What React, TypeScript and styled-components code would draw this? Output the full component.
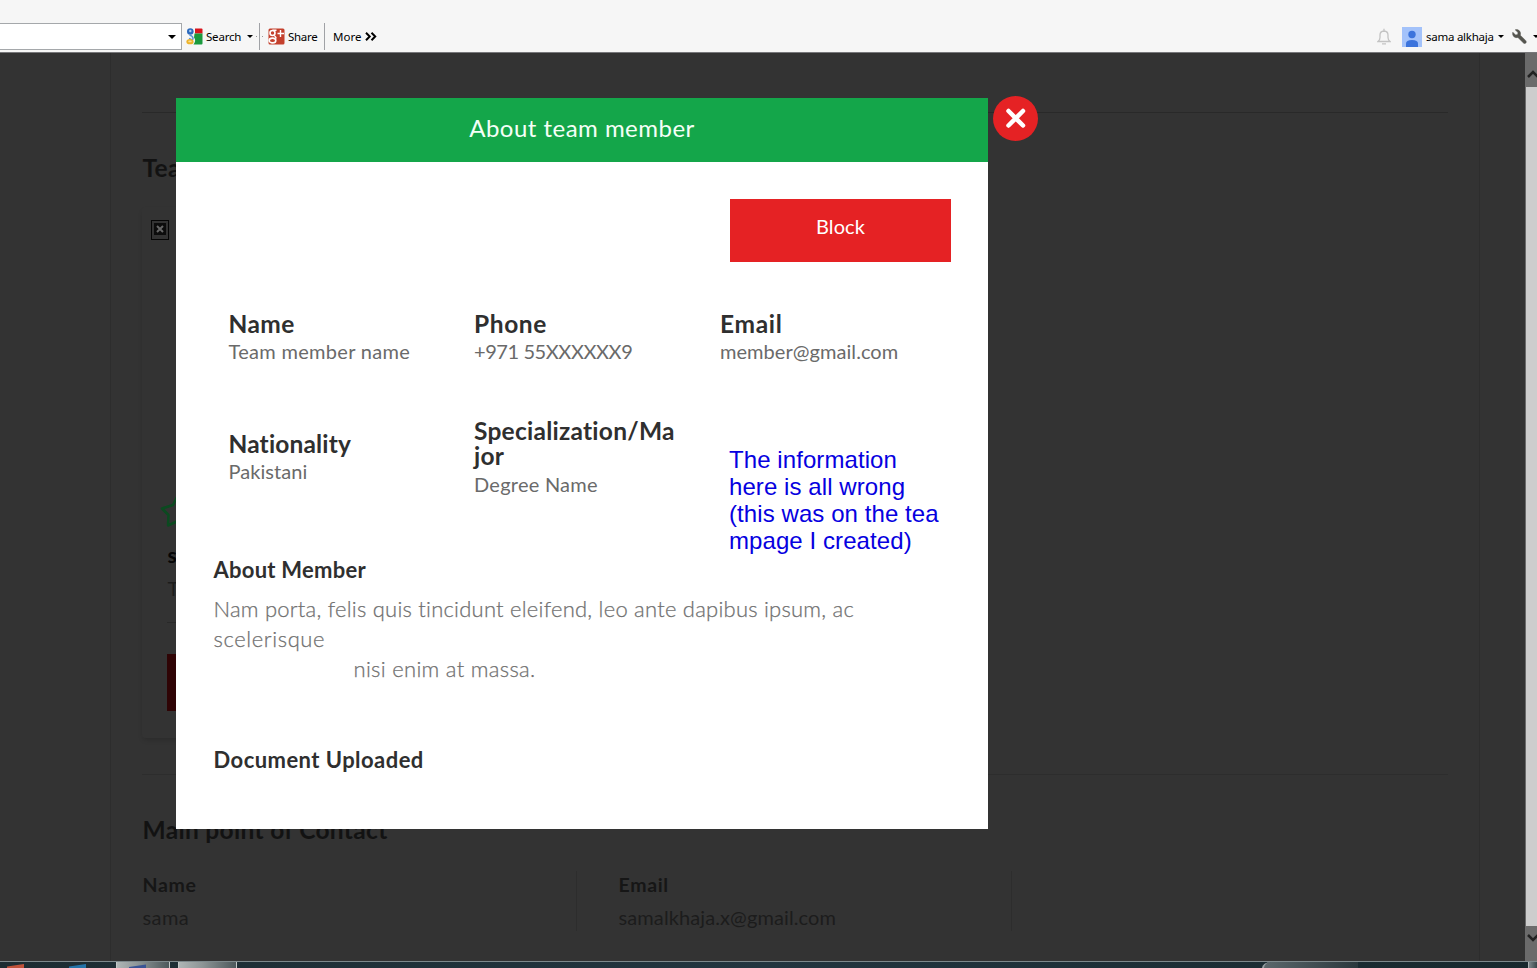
import React from "react";
import styled, { createGlobalStyle } from "styled-components";

const GlobalStyle = createGlobalStyle`
  * { box-sizing: border-box; }
  body { margin: 0; background: #333; overflow: hidden; font-family: Lato, "Open Sans", sans-serif; }
  h1, h2, h3, p { margin: 0; }
`;

const Screen = styled.div`
  display: flex;
  flex-direction: column;
  width: 1537px;
  height: 968px;
  overflow: hidden;
`;

/* Browser toolbar */
const Toolbar = styled.header`
  flex: none;
  display: flex;
  align-items: center;
  height: 53px;
  padding-top: 21px;
  background: #f6f6f6;
  border-bottom: 1px solid #77777a;
  font: 11.5px "Noto Sans", "Open Sans", sans-serif;
  color: #000;
`;
const AddressBox = styled.div`
  display: flex;
  align-items: center;
  justify-content: flex-end;
  width: 182px;
  height: 27px;
  padding-right: 5px;
  margin-right: 4px;
  background: #fff;
  border: 1px solid #a5a8ab;
  border-left: 0;
`;
const Caret = styled.i<{ $size?: number }>`
  flex: none;
  border: ${(p) => p.$size ?? 3}px solid transparent;
  border-top-color: #000;
  border-bottom: 0;
`;
const ToolText = styled.span<{ $w: number; $ls?: number; $gap?: number }>`
  width: ${(p) => p.$w}px;
  margin-left: ${(p) => p.$gap ?? 3}px;
  letter-spacing: ${(p) => p.$ls ?? 0}px;
  white-space: nowrap;
  line-height: 16px;
`;
const Divider = styled.i<{ $gap: number }>`
  width: 1px;
  height: 27px;
  margin-left: ${(p) => p.$gap}px;
  background: #a0a2a6;
`;
const Dot = styled.i<{ $gap: number }>`
  width: 1px;
  height: 1px;
  margin-left: ${(p) => p.$gap}px;
  background: #999;
`;
const IconSlot = styled.span<{ $before: number; $after?: number }>`
  display: flex;
  margin: 0 ${(p) => p.$after ?? 0}px 0 ${(p) => p.$before}px;
`;
const Account = styled.div`
  display: flex;
  align-items: center;
  margin: 0 -2px 0 auto;
`;

/* Page */
const Viewport = styled.main`
  position: relative;
  display: flex;
  flex: none;
  height: 908px;
  background: #333;
`;
const Sheet = styled.div`
  width: 1370px;
  margin: 0 45px 0 110px;
  padding: 59px 31px 0;
  border: 1px solid #2d2d2d;
  border-width: 0 1px;
`;
const Rule = styled.div<{ $faint?: boolean }>`
  height: 1px;
  background: ${(p) => (p.$faint ? "#2d2d2d" : "#292929")};
`;
const PageTitle = styled.h2`
  margin: 40px 0 0 0.5px;
  font-size: 24.5px;
  line-height: 30px;
  font-weight: 700;
  letter-spacing: 0.32px;
  color: #121212;
`;
const MemberCard = styled.section`
  display: flex;
  flex-direction: column;
  align-items: flex-start;
  width: 260px;
  height: 531px;
  margin: 24px 0 36px;
  padding: 13px 25px 0;
  border-radius: 4px;
  box-shadow: 0 3px 5px -1px rgba(0, 0, 0, 0.16);
`;
const MissingPhoto = styled.div`
  display: flex;
  justify-content: center;
  width: 18px;
  height: 20px;
  padding-top: 1px;
  margin-left: -16px;
  border: 1px solid #050505;
`;
const StarWrap = styled.div`
  height: 34px;
  margin: 252px 0 0 -8px;
`;
const CardName = styled.h3`
  margin: 17px 0 0 0.5px;
  font-size: 21px;
  line-height: 24px;
  color: #060606;
`;
const CardRole = styled.p`
  margin: 9px 0 22px 0.5px;
  font-size: 20px;
  line-height: 24px;
  color: #1c1c1c;
`;
const CardRule = styled(Rule)`
  width: 210px;
`;
const CardAction = styled.div`
  width: 210px;
  height: 57px;
  margin-top: 31px;
  background: #2f0405;
`;
const Contacts = styled.div`
  display: flex;
  margin-top: 26px;
`;
const Contact = styled.div<{ $pad?: number }>`
  width: 435px;
  height: 60px;
  padding-left: ${(p) => p.$pad ?? 0.5}px;
  border-right: 1px solid #2d2d2d;
`;
const ContactLabel = styled.h3`
  font-size: 19.5px;
  line-height: 28px;
  letter-spacing: 0.65px;
  color: #161616;
`;
const ContactValue = styled.p<{ $ls?: number }>`
  margin-top: 4px;
  font-size: 20px;
  line-height: 28px;
  letter-spacing: ${(p) => p.$ls ?? 0}px;
  color: #1c1c1c;
`;

const Scrollbar = styled.div`
  display: flex;
  flex-direction: column;
  width: 12px;
  overflow: hidden;
  background: #6b6b6b;
`;
const ScrollButton = styled.div<{ $h: number; $top: number }>`
  height: ${(p) => p.$h}px;
  padding: ${(p) => p.$top}px 0 0 2px;
  line-height: 0;
  background: #6b6b6b;
`;
const Thumb = styled.div`
  flex: 1;
  margin-left: 1px;
  background: #cdcdcd;
`;

/* Dialog */
const DialogLayer = styled.div`
  position: absolute;
  inset: 0;
  display: flex;
  align-items: flex-start;
  padding: 45px 0 0 176px;
`;
const Dialog = styled.section`
  position: relative;
  width: 812px;
  height: 731px;
  background: #fff;
`;
const DialogTitle = styled.h1`
  height: 64px;
  background: #14a64a;
  color: #f4fff7;
  font-size: 24px;
  font-weight: 400;
  line-height: 60px;
  letter-spacing: 0.48px;
  text-align: center;
`;
const CloseButton = styled.button`
  width: 45px;
  height: 45px;
  margin: -2px 0 0 5px;
  padding: 0;
  border: 0;
  border-radius: 50%;
  background: #e52224;
`;
const DialogBody = styled.div`
  padding: 37px 37px 0;
`;
const BlockButton = styled.button`
  display: block;
  width: 221px;
  height: 63px;
  margin-left: auto;
  padding: 0 0 10px;
  border: 0;
  background: #e52224;
  color: #fff;
  font: 400 20px Lato, sans-serif;
  letter-spacing: 0.1px;
`;
const Fields = styled.div`
  display: grid;
  grid-template-columns: 245.5px 246px 220px;
  grid-template-rows: 57px 82px;
  row-gap: 50.5px;
  align-items: center;
  margin: 49px 0 0 15.5px;
`;
const FieldLabel = styled.h3<{ $ls?: number; $after?: number }>`
  width: 206px;
  margin-bottom: ${(p) => p.$after ?? 0}px;
  font-size: 24.5px;
  line-height: 25px;
  letter-spacing: ${(p) => p.$ls ?? 0}px;
  color: #2f2f2f;
  white-space: nowrap;
`;
const FieldValue = styled.p<{ $ls?: number }>`
  padding-bottom: 2px;
  font-size: 20px;
  line-height: 30px;
  letter-spacing: ${(p) => p.$ls ?? 0}px;
  color: #6a6a6a;
  white-space: nowrap;
`;
const SectionTitle = styled.h3<{ $top: number; $ls?: number }>`
  margin: ${(p) => p.$top}px 0 0 0.5px;
  font-size: 22px;
  line-height: 30px;
  letter-spacing: ${(p) => p.$ls ?? 0}px;
  color: #2f2f2f;
`;
const Bio = styled.p`
  margin: 9px 0 0 0.5px;
  font-size: 22px;
  font-weight: 300;
  line-height: 30px;
  color: #707070;
  -webkit-text-stroke: 0.25px #707070;
`;
const BioLine = styled.span<{ $ls: number; $indent?: number }>`
  display: block;
  padding-left: ${(p) => p.$indent ?? 0}px;
  letter-spacing: ${(p) => p.$ls}px;
  white-space: nowrap;
`;
const Note = styled.p`
  position: absolute;
  left: 553px;
  top: 348px;
  font: 24px/27px "Liberation Sans", Arial, sans-serif;
  letter-spacing: 0.08px;
  color: #0600e0;
  white-space: pre;
`;

/* Taskbar */
const Taskbar = styled.footer`
  flex: none;
  display: flex;
  height: 7px;
  background: linear-gradient(90deg, #1c2c32, #22353f 50%, #17282d);
  border-top: 1px solid #7d898c;
`;
const TaskButton = styled.div<{ $w: number; $gap: number }>`
  width: ${(p) => p.$w}px;
  height: 6px;
  margin-left: ${(p) => p.$gap}px;
  padding-left: 12px;
  background: linear-gradient(90deg, #aeb5b5, #8e9697 40%, #4c585b);
  border: 1px solid #c1c7c7;
  border-width: 0 1px;
  line-height: 0;
`;
const Wedge = styled.i<{ $color: string; $gap: number }>`
  width: 17px;
  height: 4px;
  margin: 2px 0 0 ${(p) => p.$gap}px;
  background: ${(p) => p.$color};
  clip-path: polygon(0 60%, 100% 0, 100% 100%, 0 100%);
`;
const LanguageBar = styled.div`
  width: 96px;
  height: 6px;
  margin-left: auto;
  border-left: 2px solid #98a2a5;
  border-top-left-radius: 12px 8px;
  background: linear-gradient(90deg, #5b676b, #2a383d);
`;
const ShowDesktop = styled.div`
  width: 9px;
  height: 6px;
  margin-left: 170px;
  border-left: 1px solid #aab2b5;
  background: linear-gradient(90deg, #7b8689, #39474b);
`;

const SearchLogo = () => (
  <svg width="17" height="17" viewBox="0 0 17 17">
    <path d="M9 .5h6.500q1 0 1 1V5.500H9z" fill="#d8141c" />
    <path d="M8.500 5.500h8v10q0 1-1 1H7.500q3-4 .5-7z" fill="#1b9a3e" />
    <circle cx="4.300" cy="3.500" r="3.300" fill="#2c69bd" />
    <circle cx="4.300" cy="3" r="1.200" fill="#a9cdf0" />
    <path d="M3.500 7q3.500 1 3.500 3.500T3 10.500" stroke="#5b93cf" strokeWidth="1.500" fill="none" />
    <ellipse cx="4" cy="13.700" rx="3.600" ry="2.600" fill="#eeb32a" />
    <ellipse cx="4" cy="13.400" rx="1.800" ry=".9" fill="#f8dd90" />
  </svg>
);

const ShareLogo = () => (
  <svg width="17" height="17" viewBox="0 0 17 17">
    <rect x="0.500" y="0.500" width="16" height="16" rx="1.500" fill="#c4402d" />
    <circle cx="4.500" cy="5" r="2.500" fill="none" stroke="#fff" strokeWidth="1.600" />
    <path d="M4.500 2.200h4M6 7.500q2.500 1.500 1.800 3" stroke="#fff" strokeWidth="1.400" fill="none" />
    <ellipse cx="4.500" cy="12.500" rx="3.300" ry="2.400" fill="none" stroke="#fff" strokeWidth="1.600" />
    <path d="M12.500 2v7M9.500 5.500h6.500" stroke="#fff" strokeWidth="1.400" />
  </svg>
);

const MoreChevrons = () => (
  <svg width="12" height="9" viewBox="0 0 12 9">
    <path d="M1 .8 4.700 4.500 1 8.200M6.500.8l3.700 3.700-3.700 3.700" fill="none" stroke="#000" strokeWidth="2" />
  </svg>
);

const Bell = () => (
  <svg width="14" height="17" viewBox="0 0 14 17">
    <path d="M1 13.500q2-1.500 2-4V7q0-3.800 4-4 4 .2 4 4v2.500q0 2.500 2 4zM7 3V.8M5 15.800h4" fill="none" stroke="#c3c3c3" strokeWidth="1.300" />
  </svg>
);

const Avatar = () => (
  <svg width="20" height="20" viewBox="0 0 20 20">
    <rect width="20" height="20" fill="#a3c2fa" />
    <circle cx="10" cy="7.500" r="3.700" fill="#3b73dc" />
    <path d="M4 20v-3.500q0-3.500 6-3.500t6 3.500V20z" fill="#3b73dc" />
  </svg>
);

const Wrench = () => (
  <svg width="15" height="15" viewBox="0 0 15 15">
    <path d="M3.200.8 6 3.600 5.700 5.600 3.600 6 .8 3.200Q0 6 1.900 7.700q1.800 1.500 4 .8l5.600 5.500q1.300 1 2.300 0t0-2.300L8.300 6.200q.8-2.500-.9-4.400Q5.700.1 3.200.8z" fill="#55554f" stroke="#55554f" strokeWidth=".5" />
  </svg>
);

const App = () => (
  <Screen>
    <GlobalStyle />
    <Toolbar>
      <AddressBox><Caret $size={4} /></AddressBox>
      <SearchLogo />
      <ToolText $w={41} $ls={-0.2}>Search</ToolText>
      <Caret />
      <Dot $gap={3} />
      <Divider $gap={2} />
      <Dot $gap={2} />
      <IconSlot $before={5}><ShareLogo /></IconSlot>
      <ToolText $w={29} $ls={-0.3}>Share</ToolText>
      <Divider $gap={7} />
      <ToolText $w={32} $gap={8}>More</ToolText>
      <MoreChevrons />
      <Account>
        <Bell />
        <IconSlot $before={11}><Avatar /></IconSlot>
        <ToolText $w={72} $gap={4} $ls={-0.25}>sama alkhaja</ToolText>
        <Caret />
        <IconSlot $before={8} $after={6}><Wrench /></IconSlot>
        <Caret />
      </Account>
    </Toolbar>

    <Viewport>
      <Sheet>
        <Rule />
        <PageTitle>Team members</PageTitle>
        <MemberCard>
          <MissingPhoto>
            <svg width="14" height="14" viewBox="0 0 14 14">
              <rect x="1" y="1" width="12" height="12" fill="#0c0c0c" />
              <path d="m4 4 6 6m0-6-6 6" stroke="#666" strokeWidth="2" />
            </svg>
          </MissingPhoto>
          <StarWrap>
            <svg width="38" height="36" viewBox="0 0 38 36">
              <path d="M20 1 14 13 3 16.500 9.500 23 9 33.500 20 28.500 31 33.500 30.500 23 37 16.500 26 13z" fill="none" stroke="#0b4a20" strokeWidth="2.500" strokeLinejoin="round" />
            </svg>
          </StarWrap>
          <CardName>sama</CardName>
          <CardRole>Team leader</CardRole>
          <CardRule />
          <CardAction />
        </MemberCard>
        <Rule $faint />
        <PageTitle>Main point of Contact</PageTitle>
        <Contacts>
          <Contact>
            <ContactLabel>Name</ContactLabel>
            <ContactValue $ls={0.4}>sama</ContactValue>
          </Contact>
          <Contact $pad={41.5}>
            <ContactLabel>Email</ContactLabel>
            <ContactValue $ls={0.1}>samalkhaja.x@gmail.com</ContactValue>
          </Contact>
        </Contacts>
      </Sheet>
      <Scrollbar>
        <ScrollButton $h={34} $top={16}>
          <svg width="14" height="10" viewBox="0 0 14 10"><path d="m1 8 5-5 5 5" fill="none" stroke="#222" strokeWidth="2.500" /></svg>
        </ScrollButton>
        <Thumb />
        <ScrollButton $h={35} $top={7}>
          <svg width="14" height="10" viewBox="0 0 14 10"><path d="m1 2 5 5 5-5" fill="none" stroke="#222" strokeWidth="2.500" /></svg>
        </ScrollButton>
      </Scrollbar>

      <DialogLayer>
        <Dialog>
          <DialogTitle>About team member</DialogTitle>
          <DialogBody>
            <BlockButton>Block</BlockButton>
            <Fields>
              <div>
                <FieldLabel $ls={0.4}>Name</FieldLabel>
                <FieldValue $ls={0.3}>Team member name</FieldValue>
              </div>
              <div>
                <FieldLabel $ls={0.6}>Phone</FieldLabel>
                <FieldValue $ls={-0.42}>+971 55XXXXXX9</FieldValue>
              </div>
              <div>
                <FieldLabel $ls={0.7}>Email</FieldLabel>
                <FieldValue $ls={0.05}>member@gmail.com</FieldValue>
              </div>
              <div>
                <FieldLabel $ls={0.15}>Nationality</FieldLabel>
                <FieldValue $ls={0.05}>Pakistani</FieldValue>
              </div>
              <div>
                <FieldLabel $ls={0.25} $after={1}>Specialization/Ma<br />jor</FieldLabel>
                <FieldValue $ls={0.25}>Degree Name</FieldValue>
              </div>
            </Fields>
            <SectionTitle $top={54.5} $ls={0.25}>About Member</SectionTitle>
            <Bio>
              <BioLine $ls={0.23}>Nam porta, felis quis tincidunt eleifend, leo ante dapibus ipsum, ac</BioLine>
              <BioLine $ls={0.6}>scelerisque</BioLine>
              <BioLine $ls={0.3} $indent={140}>nisi enim at massa.</BioLine>
            </Bio>
            <SectionTitle $top={61} $ls={0.45}>Document Uploaded</SectionTitle>
          </DialogBody>
          <Note>{"The information\nhere is all wrong\n(this was on the tea\nmpage I created)"}</Note>
        </Dialog>
        <CloseButton aria-label="Close">
          <svg width="45" height="45" viewBox="0 0 45 45">
            <path d="m15.500 15 14.500 14.500m0-14.500-14.500 14.500" stroke="#fff" strokeWidth="4.500" strokeLinecap="round" />
          </svg>
        </CloseButton>
      </DialogLayer>
    </Viewport>

    <Taskbar>
      <Wedge $color="#c0523a" $gap={7} />
      <Wedge $color="#2373a8" $gap={45} />
      <TaskButton $w={54} $gap={30}>
        <svg width="17" height="6" viewBox="0 0 17 6"><path d="M0 5 17 2.500V6H0z" fill="#3a5494" /></svg>
      </TaskButton>
      <TaskButton $w={59} $gap={8} />
      <LanguageBar />
      <ShowDesktop />
    </Taskbar>
  </Screen>
);

export default App;
